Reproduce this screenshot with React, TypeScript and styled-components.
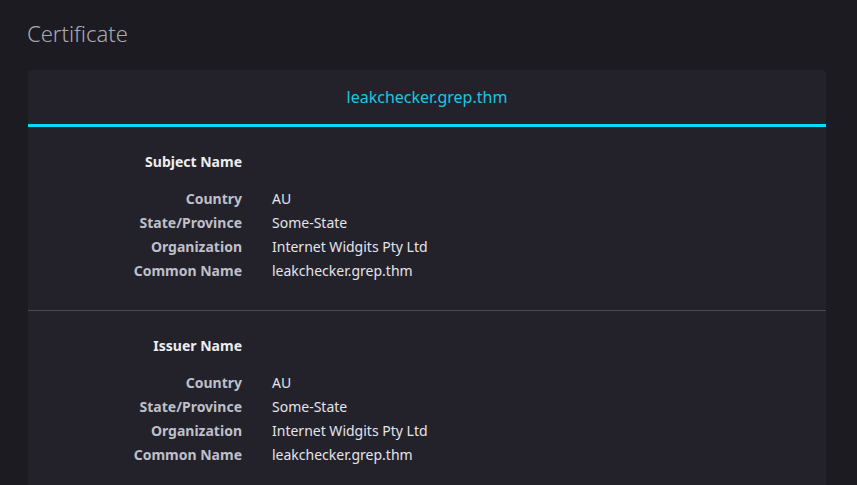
import styled, { createGlobalStyle } from "styled-components";

const GlobalStyle = createGlobalStyle`
  html, body {
    margin: 0;
    padding: 0;
    background: #1c1b22;
  }
  body {
    font-family: "Noto Sans", "Open Sans", sans-serif;
    color: #fbfbfe;
  }
`

const Page = styled.div`
  min-height: 485px;
  padding: 17px 31px 0 28px;
  box-sizing: border-box;
`

const Title = styled.h1`
  margin: 0 0 21px -1px;
  font-size: 22px;
  font-weight: 300;
  line-height: 32px;
  color: #a9a9b0;
`

const Card = styled.div`
  background: #23222b;
  border-radius: 4px 4px 0 0;
`

const CardHeader = styled.div`
  height: 54px;
  display: flex;
  align-items: center;
  justify-content: center;
  border-bottom: 3px solid #00ddff;
  color: #1bc5e3;
  font-size: 16px;
`

const Section = styled.div<{ $last?: boolean }>`
  padding: 23px 0 ${p => (p.$last ? "30px" : "27px")};
  border-bottom: ${p => (p.$last ? "none" : "1px solid #4a4950")};
`

const Grid = styled.div`
  display: grid;
  grid-template-columns: 214px 1fr;
  column-gap: 30px;
  font-size: 14px;
  line-height: 24px;
`

const Heading = styled.div`
  grid-column: 1;
  text-align: right;
  font-weight: 700;
  color: #ededf0;
  margin-bottom: 13px;
`

const Label = styled.div`
  text-align: right;
  font-weight: 700;
  color: #bfbfc9;
`

const Value = styled.div`
  color: #e4e4ea;
`

type Field = { label: string; value: string }

const fields: Field[] = [
  { label: "Country", value: "AU" },
  { label: "State/Province", value: "Some-State" },
  { label: "Organization", value: "Internet Widgits Pty Ltd" },
  { label: "Common Name", value: "leakchecker.grep.thm" },
]

const sections = [
  { key: "subject", title: "Subject Name", fields },
  { key: "issuer", title: "Issuer Name", fields },
]

const App = () => {
  return (
    <>
      <GlobalStyle />
      <Page>
        <Title>Certificate</Title>
        <Card>
          <CardHeader>leakchecker.grep.thm</CardHeader>
          {sections.map((s, i) => (
            <Section key={s.key} $last={i === sections.length - 1}>
              <Grid>
                <Heading>{s.title}</Heading>
                <div />
                {s.fields.map(f => (
                  <Row key={f.label} field={f} />
                ))}
              </Grid>
            </Section>
          ))}
        </Card>
      </Page>
    </>
  )
}

const Row = ({ field }: { field: Field }) => (
  <>
    <Label>{field.label}</Label>
    <Value>{field.value}</Value>
  </>
)

export default App
